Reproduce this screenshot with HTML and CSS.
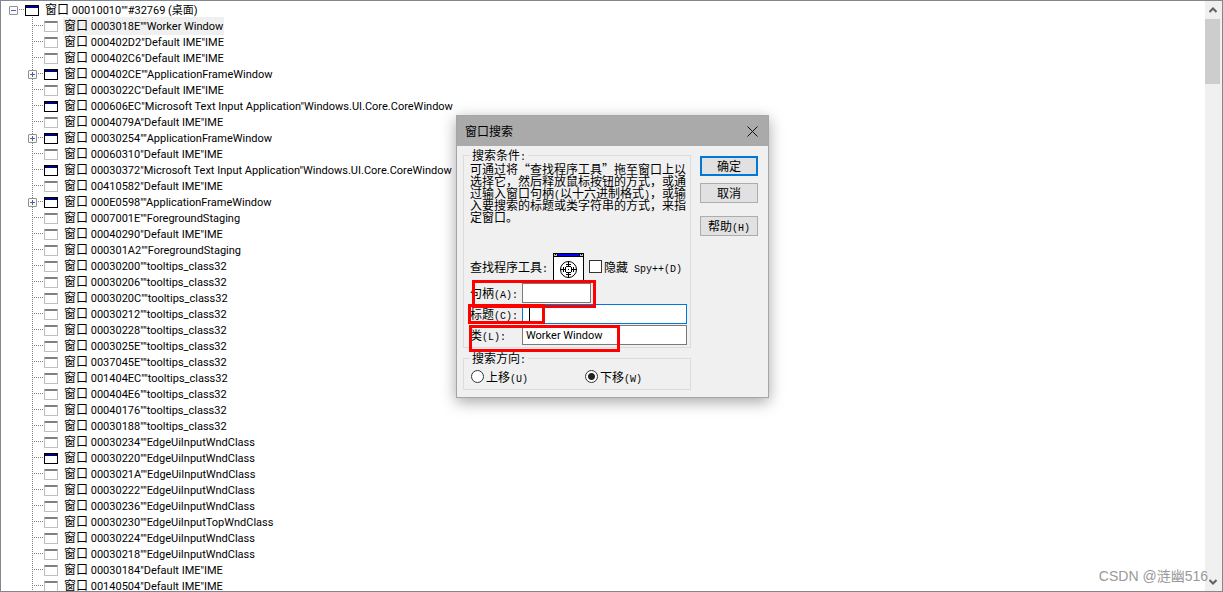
FILE: index.html
```html
<!DOCTYPE html>
<html lang="zh-CN">
<head>
  <meta charset="UTF-8" />
  <title>Spy++</title>
  <meta name="viewport" content="width=device-width, initial-scale=1" />
  <link rel="stylesheet" href="styles.css">
</head>
<body>

  <main class="pane">
    <div class="tree">
      <div class="node root"><button class="toggle open" aria-label="折叠"></button><i class="win on"></i><span class="name"><b>窗口</b> 00010010""#32769 (桌面)</span></div>
      <ul>
        <li class="node"><i class="win"></i><span class="name selected"><b>窗口</b> 0003018E""Worker Window</span></li>
        <li class="node"><i class="win"></i><span class="name"><b>窗口</b> 000402D2"Default IME"IME</span></li>
        <li class="node"><i class="win"></i><span class="name"><b>窗口</b> 000402C6"Default IME"IME</span></li>
        <li class="node"><button class="toggle" aria-label="展开"></button><i class="win on"></i><span class="name"><b>窗口</b> 000402CE""ApplicationFrameWindow</span></li>
        <li class="node"><i class="win"></i><span class="name"><b>窗口</b> 0003022C"Default IME"IME</span></li>
        <li class="node"><i class="win on"></i><span class="name"><b>窗口</b> 000606EC"Microsoft Text Input Application"Windows.UI.Core.CoreWindow</span></li>
        <li class="node"><i class="win"></i><span class="name"><b>窗口</b> 0004079A"Default IME"IME</span></li>
        <li class="node"><button class="toggle" aria-label="展开"></button><i class="win on"></i><span class="name"><b>窗口</b> 00030254""ApplicationFrameWindow</span></li>
        <li class="node"><i class="win"></i><span class="name"><b>窗口</b> 00060310"Default IME"IME</span></li>
        <li class="node"><i class="win on"></i><span class="name"><b>窗口</b> 00030372"Microsoft Text Input Application"Windows.UI.Core.CoreWindow</span></li>
        <li class="node"><i class="win"></i><span class="name"><b>窗口</b> 00410582"Default IME"IME</span></li>
        <li class="node"><button class="toggle" aria-label="展开"></button><i class="win on"></i><span class="name"><b>窗口</b> 000E0598""ApplicationFrameWindow</span></li>
        <li class="node"><i class="win"></i><span class="name"><b>窗口</b> 0007001E""ForegroundStaging</span></li>
        <li class="node"><i class="win"></i><span class="name"><b>窗口</b> 00040290"Default IME"IME</span></li>
        <li class="node"><i class="win"></i><span class="name"><b>窗口</b> 000301A2""ForegroundStaging</span></li>
        <li class="node"><i class="win"></i><span class="name"><b>窗口</b> 00030200""tooltips_class32</span></li>
        <li class="node"><i class="win"></i><span class="name"><b>窗口</b> 00030206""tooltips_class32</span></li>
        <li class="node"><i class="win"></i><span class="name"><b>窗口</b> 0003020C""tooltips_class32</span></li>
        <li class="node"><i class="win"></i><span class="name"><b>窗口</b> 00030212""tooltips_class32</span></li>
        <li class="node"><i class="win"></i><span class="name"><b>窗口</b> 00030228""tooltips_class32</span></li>
        <li class="node"><i class="win"></i><span class="name"><b>窗口</b> 0003025E""tooltips_class32</span></li>
        <li class="node"><i class="win"></i><span class="name"><b>窗口</b> 0037045E""tooltips_class32</span></li>
        <li class="node"><i class="win"></i><span class="name"><b>窗口</b> 001404EC""tooltips_class32</span></li>
        <li class="node"><i class="win"></i><span class="name"><b>窗口</b> 000404E6""tooltips_class32</span></li>
        <li class="node"><i class="win"></i><span class="name"><b>窗口</b> 00040176""tooltips_class32</span></li>
        <li class="node"><i class="win"></i><span class="name"><b>窗口</b> 00030188""tooltips_class32</span></li>
        <li class="node"><i class="win"></i><span class="name"><b>窗口</b> 00030234""EdgeUiInputWndClass</span></li>
        <li class="node"><i class="win on"></i><span class="name"><b>窗口</b> 00030220""EdgeUiInputWndClass</span></li>
        <li class="node"><i class="win"></i><span class="name"><b>窗口</b> 0003021A""EdgeUiInputWndClass</span></li>
        <li class="node"><i class="win"></i><span class="name"><b>窗口</b> 00030222""EdgeUiInputWndClass</span></li>
        <li class="node"><i class="win"></i><span class="name"><b>窗口</b> 00030236""EdgeUiInputWndClass</span></li>
        <li class="node"><i class="win"></i><span class="name"><b>窗口</b> 00030230""EdgeUiInputTopWndClass</span></li>
        <li class="node"><i class="win"></i><span class="name"><b>窗口</b> 00030224""EdgeUiInputWndClass</span></li>
        <li class="node"><i class="win"></i><span class="name"><b>窗口</b> 00030218""EdgeUiInputWndClass</span></li>
        <li class="node"><i class="win"></i><span class="name"><b>窗口</b> 00030184"Default IME"IME</span></li>
        <li class="node"><i class="win"></i><span class="name"><b>窗口</b> 00140504"Default IME"IME</span></li>
      </ul>
    </div>

    <div class="scrollbar">
      <button class="arrow" aria-label="向上滚动"><svg width="8" height="6" viewBox="0 0 8 6"><path d="M0.5 5L4 1.5L7.5 5" /></svg></button>
      <div class="thumb"></div>
      <button class="arrow down" aria-label="向下滚动"><svg width="8" height="6" viewBox="0 0 8 6"><path d="M0.5 1L4 4.5L7.5 1" /></svg></button>
    </div>
  </main>

  <form class="dialog" role="dialog" aria-labelledby="title">
    <header class="titlebar">
      <span id="title">窗口搜索</span>
      <button type="button" class="close" aria-label="关闭"><svg width="11" height="11" viewBox="0 0 11 11"><path d="M0.5 0.5L10.5 10.5M10.5 0.5L0.5 10.5" /></svg></button>
    </header>
    <div class="content">
      <div class="options">
        <fieldset>
          <legend>搜索条件<span class="half">:</span></legend>
          <p class="hint">可通过将“查找程序工具”拖至窗口上以<br>选择它，然后释放鼠标按钮的方式，或通<br>过输入窗口句柄<span class="half">(</span>以十六进制格式<span class="half">)</span>，或输<br>入要搜索的标题或类字符串的方式，来指<br>定窗口。</p>
          <div class="finder">
            <span class="caption">查找程序工具<span class="half">:</span></span>
            <svg class="tool" width="31" height="27" viewBox="0 0 31 27">
              <path d="M0 0H31V27H0Z" fill="#000" />
              <path d="M1 4H30V27H1Z" fill="#fff" />
              <path d="M5 1H26V3H5Z" fill="#00f" />
              <path d="M1 1H4V3H1ZM27 1H30V3H27Z" fill="#c0c0c0" />
              <path d="M2 1H3V2H2ZM28 1H29V2H28Z" fill="#000" />
              <g fill="none" stroke="#000">
                <circle cx="15.5" cy="16.5" r="8" />
                <path d="M15.5 8V14M15.5 19V25M7 16.5H13M18 16.5H24M13 11.5H18M13 13.5H18M13 19.5H18M13 21.5H18M10.5 14V19M12.5 14V19M18.5 14V19M20.5 14V19M15 16.5H16" />
              </g>
            </svg>
            <label class="check"><input type="checkbox"><span>隐藏<span class="half"> Spy++(D)</span></span></label>
          </div>
          <div class="field">
            <label for="handle">句柄<span class="half">(A):</span></label>
            <input type="text" id="handle" class="short">
          </div>
          <div class="field">
            <label for="caption">标题<span class="half">(C):</span></label>
            <input type="text" id="caption" class="active">
          </div>
          <div class="field">
            <label for="class">类<span class="half">(L):</span></label>
            <input type="text" id="class" value="Worker Window">
          </div>
        </fieldset>
        <fieldset class="direction">
          <legend>搜索方向<span class="half">:</span></legend>
          <div class="radios">
            <label><input type="radio" name="dir"><span>上移<span class="half">(U)</span></span></label>
            <label><input type="radio" name="dir" checked><span>下移<span class="half">(W)</span></span></label>
          </div>
        </fieldset>
      </div>
      <div class="actions">
        <button type="button" class="primary">确定</button>
        <button type="button">取消</button>
        <button type="button" class="help">帮助<span class="half">(H)</span></button>
      </div>
    </div>
    <i class="caret"></i>
    <i class="mark mark-handle"></i>
    <i class="mark mark-caption"></i>
    <i class="mark mark-class"></i>
  </form>

  <div class="watermark">CSDN @涟幽516</div>

</body>
</html>
```
FILE: styles.css
```css
* {
  box-sizing: border-box;
}
body {
  margin: 0;
  height: 100vh;
  overflow: hidden;
  position: relative;
  background: #fff;
  color: #000;
  font-family: Roboto, "Noto Sans CJK SC", sans-serif;
  font-size: 11px;
}
button {
  padding: 0;
  border: none;
  font: inherit;
  color: inherit;
}

/* window tree */
.pane {
  display: flex;
  height: 100%;
  border: 1px solid #828790;
}
.tree {
  flex: 1;
  min-width: 0;
  overflow: hidden;
}
.tree ul {
  list-style: none;
  margin: 0 0 0 27px;
  padding: 0;
}
.node {
  display: grid;
  grid-template-columns: 16px 19px auto;
  align-items: center;
  justify-content: start;
  height: 16px;
  background:
    repeating-linear-gradient(#808080 0 1px, transparent 1px 2px) 4px 0 / 1px 16px no-repeat,
    repeating-linear-gradient(90deg, #808080 0 1px, transparent 1px 2px) 6px 8px / 10px 1px no-repeat;
}
.root {
  margin-left: 8px;
  background: repeating-linear-gradient(90deg, #808080 0 1px, transparent 1px 2px) 10px 8px / 6px 1px no-repeat;
}
.toggle {
  width: 9px;
  height: 9px;
  border: 1px solid #919191;
  border-radius: 1px;
  background:
    linear-gradient(#4b63a7, #4b63a7) center / 5px 1px no-repeat,
    linear-gradient(#4b63a7, #4b63a7) center / 1px 5px no-repeat,
    #fafafa;
}
.toggle.open {
  background: linear-gradient(#4b63a7, #4b63a7) center / 5px 1px no-repeat, #fafafa;
}
.win {
  grid-column: 2;
  width: 14px;
  height: 11px;
  border: 1px solid #c0c0c0;
  border-top-color: #808080;
  background: linear-gradient(#808080, #808080) top / 100% 1px no-repeat, #fff;
}
.win.on {
  border-color: #000;
  background: linear-gradient(#000080, #000080) top / 100% 2px no-repeat, #fff;
}
.name {
  padding: 0 1px;
  line-height: 16px;
  white-space: nowrap;
}
.name b {
  font-family: "Noto Sans CJK SC", sans-serif;
  font-size: 12px;
  font-weight: normal;
}
.selected {
  background: #f0f0f0;
}

/* scrollbar */
.scrollbar {
  display: flex;
  flex-direction: column;
  width: 17px;
  padding-right: 2px;
  background: #f0f0f0;
}
.arrow {
  display: flex;
  align-items: center;
  justify-content: center;
  height: 18px;
  background: none;
}
.arrow path {
  fill: none;
  stroke: #606060;
  stroke-width: 2;
}
.arrow.down {
  margin-top: auto;
}
.thumb {
  height: 65px;
  background: #cdcdcd;
}

/* search dialog */
.dialog {
  position: absolute;
  top: 115px;
  left: 456px;
  width: 313px;
  border: 1px solid #a5a5a5;
  background: #f0f0f0;
  box-shadow: 0 4px 14px rgba(0, 0, 0, 0.35);
  font-family: "Noto Sans CJK SC", sans-serif;
  font-size: 12px;
  line-height: 12px;
}
.half {
  font-family: "Liberation Mono", monospace;
  font-size: 10px;
  line-height: 0;
  white-space: pre;
}
.titlebar {
  display: flex;
  align-items: center;
  justify-content: space-between;
  height: 30px;
  padding: 0 10px 0 8px;
  background: #aaa;
}
.close {
  display: flex;
  background: none;
}
.close path {
  stroke: #111;
}
.content {
  display: flex;
  gap: 9px;
  padding: 3px 10px 7px 6px;
}
.options {
  flex: 1;
}
fieldset {
  margin: 0;
  padding: 2px 3px 1px 6px;
  border: 1px solid #dcdcdc;
}
legend {
  padding: 0 2px;
}
.hint {
  margin: 0 0 30px;
  white-space: nowrap;
}
.finder {
  display: flex;
  align-items: center;
  margin-bottom: 3px;
}
.caption {
  width: 83px;
}
.tool {
  display: block;
  margin-right: 5px;
}
.finder label,
.radios label {
  display: flex;
  align-items: center;
  gap: 2px;
  white-space: nowrap;
}
input[type="checkbox"],
input[type="radio"] {
  appearance: none;
  width: 13px;
  height: 13px;
  margin: 0;
  border: 1px solid #333;
  background: #fff;
}
input[type="radio"] {
  border-radius: 50%;
}
input[type="radio"]:checked {
  background: radial-gradient(circle, #222 3px, #fff 4px);
}
.field {
  display: flex;
  align-items: center;
  margin-bottom: 1px;
}
.field label {
  width: 52px;
}
.field input {
  flex: 1;
  min-width: 0;
  height: 20px;
  padding: 0 3px;
  border: 1px solid #7a7a7a;
  background: #fff;
  font-family: Roboto, sans-serif;
  font-size: 11px;
}
.field .short {
  flex: none;
  width: 69px;
}
.field .active {
  border-color: #0078d7;
}
.direction {
  margin-top: 4px;
}
.radios {
  display: grid;
  grid-template-columns: 114px 1fr;
  padding: 4px 0 5px 1px;
}
.actions {
  display: flex;
  flex-direction: column;
  gap: 7px;
  width: 58px;
  padding-top: 7px;
}
.actions button {
  height: 20px;
  border: 1px solid #adadad;
  background: #e1e1e1;
}
.actions .primary {
  border: 2px solid #0078d7;
}
.actions .help {
  margin-top: 6px;
}

/* caret and red highlight frames over the fields */
.caret {
  position: absolute;
  top: 192px;
  left: 72px;
  width: 1px;
  height: 13px;
  background: #000;
}
.mark {
  position: absolute;
  border: 3px solid #f00;
}
.mark-handle {
  top: 164px;
  left: 15px;
  width: 124px;
  height: 28px;
}
.mark-caption {
  top: 188px;
  left: 11px;
  width: 77px;
  height: 20px;
}
.mark-class {
  top: 209px;
  left: 12px;
  width: 151px;
  height: 27px;
}

.watermark {
  position: absolute;
  right: 15px;
  bottom: 6px;
  color: #999;
  font-family: "Liberation Sans", "Noto Sans CJK SC", sans-serif;
  font-size: 14px;
  line-height: 20px;
}
```
